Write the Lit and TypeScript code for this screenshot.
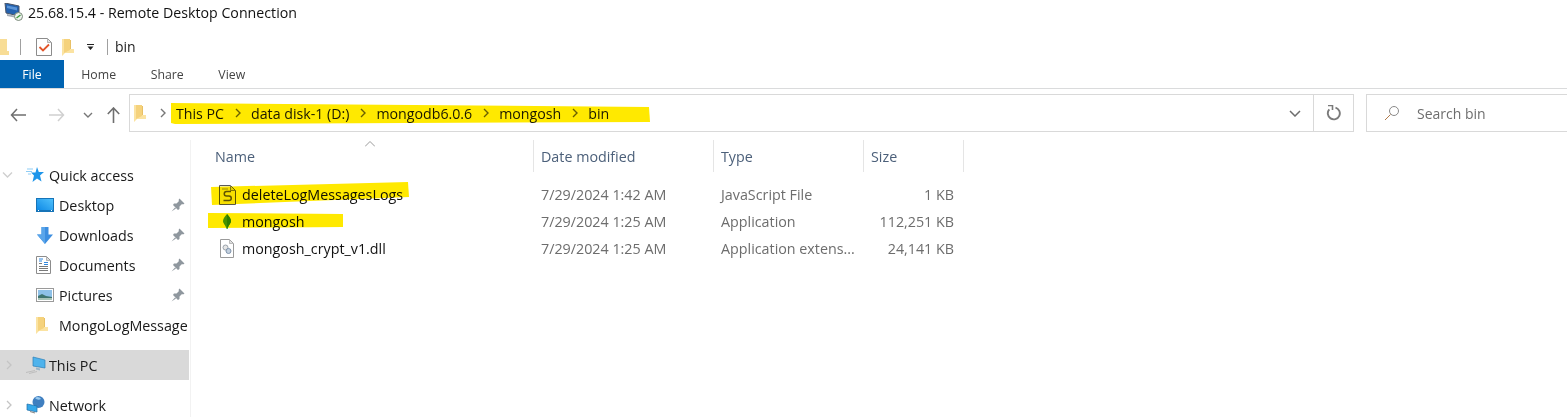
import { LitElement, html, css, svg } from 'lit';
import { customElement } from 'lit/decorators.js';

const folder = svg`<svg width="12" height="18" viewBox="0 0 12 18"><path d="M0 1h8v10h4v4H3l-3 3z" fill="#fbe3a2"/><path d="M2 1h6v11l-6 3z" fill="#f5d27c"/><path d="M8 2h1v9H8z" fill="#e8c066"/></svg>`;

const pin = svg`<svg class="pin" width="14" height="14" viewBox="0 0 14 14"><path d="M8.500 .5l5 5-1.500 1-1-.5-2.500 2.500V11L7 12 2 7l1-1.500h2.500L8 3l-.5-1zM4 9.500L.5 13.500 5 10.500z" fill="#8f979e"/></svg>`;

const navIcons: Record<string, unknown> = {
  Desktop: svg`<svg width="18" height="14" viewBox="0 0 18 14"><defs><linearGradient id="dk" x1="0" y1="1" x2="1" y2="0"><stop offset="0" stop-color="#0f8ae6"/><stop offset="1" stop-color="#4fc0fb"/></linearGradient></defs><rect width="18" height="14" fill="#1674b8"/><rect x="1" y="1" width="16" height="11" fill="url(#dk)"/><path d="M2 12.500h1M15 12.500h1" stroke="#fff"/></svg>`,
  Downloads: svg`<svg width="18" height="17" viewBox="0 0 18 17"><path d="M5.500 0h7v7.500H17L9 17 1 7.500h4.500z" fill="#3d8ee0"/><path d="M5.500 0h3.500v17L1 7.500h4.500z" fill="#5aa5ea"/></svg>`,
  Documents: svg`<svg width="15" height="18" viewBox="0 0 15 18"><path d="M.5 .5h10l4 4v13H.5z" fill="#fff" stroke="#8c8c8c"/><path d="M10.500 1v3.500H14" fill="#ddd" stroke="#8c8c8c" stroke-width=".6"/><path d="M3 3h4M3 5h3M8 6.500h4M8 8.500h4" stroke="#2f86de"/><path d="M3 10.500h9M3 12.500h9M3 14.500h9M3 7.500h3" stroke="#7a7a7a"/></svg>`,
  Pictures: svg`<svg width="18" height="14" viewBox="0 0 18 14"><rect x=".5" y=".5" width="17" height="13" fill="#fff" stroke="#9a9a9a"/><rect x="2" y="2" width="14" height="10" fill="#8ec1e8"/><path d="M2 8l4-2 4 2 6 1v3H2z" fill="#3f7570"/><path d="M2 10l14 0v2H2z" fill="#a9c4b8"/></svg>`,
};

const files = [
  { name: 'deleteLogMessagesLogs', date: '7/29/2024 1:42 AM', type: 'JavaScript File', size: '1 KB', icon: 'js' },
  { name: 'mongosh', date: '7/29/2024 1:25 AM', type: 'Application', size: '112,251 KB', icon: 'leaf' },
  { name: 'mongosh_crypt_v1.dll', date: '7/29/2024 1:25 AM', type: 'Application extens...', size: '24,141 KB', icon: 'dll' },
];

const fileIcon = (k: string) => {
  if (k === 'js') return svg`<svg width="17" height="20" viewBox="0 0 17 20"><path d="M.5 .5h11l5 5v14H.5z" fill="#f6f4dc" stroke="#5a5a5a"/><path d="M11.500 1v4.500H16" fill="#ddd" stroke="#5a5a5a" stroke-width=".7"/><path d="M12 6.500H7.500a2 2 0 0 0 0 4.500h2.500a2 2 0 0 1 0 4.500H4.500" fill="none" stroke="#5f5a28" stroke-width="1.500"/><path d="M3 4h6" stroke="#9a9a60"/></svg>`;
  if (k === 'leaf') return svg`<svg width="8" height="15" viewBox="0 0 8 15"><path d="M4 0c2 2.500 4 4.500 4 7 0 2.500-2.500 4-3.600 8h-.8C2.500 11 0 9.500 0 7c0-2.500 2-4.500 4-7z" fill="#46a02a"/><path d="M4 0c2 2.500 4 4.500 4 7 0 2.500-2.500 4-3.600 8H4z" fill="#2f8a22"/></svg>`;
  return svg`<svg width="14" height="19" viewBox="0 0 14 19"><path d="M.5 .5h9l4 4v14H.5z" fill="#fff" stroke="#9a9a9a"/><path d="M9.500 1v3.500H13" fill="#ddd" stroke="#9a9a9a" stroke-width=".6"/><circle cx="5.500" cy="8.500" r="2.500" fill="#e6e6e6" stroke="#9aa2aa"/><circle cx="8.500" cy="12" r="2.500" fill="#c3d0de" stroke="#7f93ab"/></svg>`;
};

const rightChev = svg`<svg width="6" height="10" viewBox="0 0 6 10"><path d="M1 1l4 4-4 4" fill="none" stroke="#c4c4c4" stroke-width="1.300"/></svg>`;

@customElement('app-root')
export class AppRoot extends LitElement {
  render() {
    return html`
      <div class="window">
        <div class="title">
          <svg width="20" height="19" viewBox="0 0 20 19"><path d="M1 0l14 3v10L2 10z" fill="#2462b0" stroke="#4a5568"/><path d="M3 2.500l10 2v3L3 5z" fill="#5b95d8"/><path d="M3 11l9 2 1 2-10-2z" fill="#a4acb5"/><circle cx="14.500" cy="13.500" r="4" fill="#eef2ee" stroke="#7a8a7a"/><path d="M12.500 15l4-3" stroke="#3a9a3a" stroke-width="1.300"/></svg>
          <span>25.68.15.4 - Remote Desktop Connection</span>
        </div>
        <div class="qat">
          <svg class="clip" width="9" height="16" viewBox="0 0 9 16"><path d="M0 0h7v12h2v4H0z" fill="#f8dd96"/></svg>
          <i class="bar"></i>
          <svg class="check" width="16" height="18" viewBox="0 0 16 18"><path d="M.5 .5h11l4 4v13H.5z" fill="#fff" stroke="#8c8c8c"/><path d="M11.500 1v3.500H15" fill="#e4e4e4" stroke="#8c8c8c" stroke-width=".6"/><path d="M3.500 9l3.500 3.500L13 6.500" fill="none" stroke="#e2552a" stroke-width="1.800"/></svg>
          <span class="qf">${folder}</span>
          <svg class="drop" width="7" height="6" viewBox="0 0 7 6"><path d="M0 0h7v1H0zM.5 2.500h6L3.500 6z" fill="#222"/></svg>
          <i class="bar"></i>
          <span class="qt">bin</span>
        </div>
        <div class="tabs">
          <span class="tab file">File</span>
          <span class="tab">Home</span>
          <span class="tab">Share</span>
          <span class="tab">View</span>
        </div>
        <div class="nav">
          <div class="arrows">
            <svg width="16" height="14" viewBox="0 0 16 14"><path d="M7 1L1.500 7 7 13M2 7h14" fill="none" stroke="#6f6f6f" stroke-width="1.500"/></svg>
            <svg class="fwd" width="16" height="14" viewBox="0 0 16 14"><path d="M9 1l5.500 6L9 13M14 7H0" fill="none" stroke="#d0d0d0" stroke-width="1.500"/></svg>
            <svg class="rec" width="10" height="6" viewBox="0 0 10 6"><path d="M1 1l4 4 4-4" fill="none" stroke="#777" stroke-width="1.400"/></svg>
            <svg class="up" width="13" height="16" viewBox="0 0 13 16"><path d="M.8 7l5.700-6 5.700 6M6.500 1v15" fill="none" stroke="#6f6f6f" stroke-width="1.600"/></svg>
          </div>
          <div class="address">
            <div class="crumbs">
              ${folder}
              <svg class="chev" width="6" height="10" viewBox="0 0 6 10"><path d="M1 1l4 4-4 4" fill="none" stroke="#777" stroke-width="1.400"/></svg>
              ${['This PC', 'data disk-1 (D:)', 'mongodb6.0.6', 'mongosh', 'bin'].map(
                (c, i) => html`${i ? html`<svg class="sep" width="6" height="10" viewBox="0 0 6 10"><path d="M1 1l4 4-4 4" fill="none" stroke="#6a6a20" stroke-width="1.400"/></svg>` : ''}<span>${c}</span>`
              )}
            </div>
            <svg class="more" width="12" height="7" viewBox="0 0 12 7"><path d="M1 1l5 5 5-5" fill="none" stroke="#6d6d6d" stroke-width="1.500"/></svg>
            <div class="refresh">
              <svg width="15" height="16" viewBox="0 0 15 16"><path d="M9.500 2.600a6 6 0 1 1-6.200 1.800" fill="none" stroke="#7a7a7a" stroke-width="1.900"/><path d="M2 .5h4.500V5" fill="none" stroke="#7a7a7a" stroke-width="1.600"/></svg>
            </div>
          </div>
          <div class="search">
            <svg width="16" height="16" viewBox="0 0 16 16"><circle cx="10" cy="6" r="4.500" fill="none" stroke="#8a8a8a"/><path d="M6.500 9.500L1 15" stroke="#b07a4a"/></svg>
            <span>Search bin</span>
          </div>
        </div>
        <div class="body">
          <div class="side">
            <div class="item">
              <span class="tw down"><svg width="11" height="6" viewBox="0 0 11 6"><path d="M1 .5l4.500 4.500L10 .5" fill="none" stroke="#cfcfcf" stroke-width="1.400"/></svg></span>
              <span class="tic"><svg width="18" height="16" viewBox="0 0 18 16"><path d="M11 0l1.800 5H18l-4 3.500 1.500 6-4.500-3-4.500 3.500 1.500-6.500-3-3h4.500z" fill="#1f96ea"/><path d="M1 2h6M0 4.500h6M2 7h3" stroke="#8fcdf5"/></svg></span>
              <span>Quick access</span>
            </div>
            ${Object.keys(navIcons).map(
              (k) => html`<div class="item sub"><span class="sic">${navIcons[k]}</span><span class="grow">${k}</span>${pin}</div>`
            )}
            <div class="item sub"><span class="sic">${folder}</span><span class="grow">MongoLogMessage</span></div>
            <div class="item gap sel">
              <span class="tw">${rightChev}</span>
              <span class="tic"><svg width="20" height="18" viewBox="0 0 20 18"><path d="M7 1l12 3v8L7 10z" fill="#4fb3ec" stroke="#2b7fb8" stroke-width=".7"/><path d="M10 11.500l4 1v2l-4-1z" fill="#9ab4c6"/><path d="M0 16.500l9-2M3 17.500l8-2" stroke="#bdbdbd"/></svg></span>
              <span>This PC</span>
            </div>
            <div class="item gap">
              <span class="tw">${rightChev}</span>
              <span class="tic"><svg width="19" height="18" viewBox="0 0 19 18"><circle cx="12.500" cy="6" r="6" fill="#3f7fc0"/><path d="M9 2c2-2 5-1 6 1-2 1-4 1-6-1z" fill="#9bcbf0"/><path d="M1 8l10 2v6L1 14z" fill="#35a8ea" stroke="#1f6fa8" stroke-width=".7"/><path d="M4 15.500l5 1.500" stroke="#8a8a8a" stroke-width="1.200"/></svg></span>
              <span>Network</span>
            </div>
          </div>
          <div class="list">
            <div class="row head">
              <span class="c name">Name</span>
              <span class="c">Date modified</span>
              <span class="c">Type</span>
              <span class="c">Size</span>
            </div>
            ${files.map(
              (f) => html`<div class="row file-row">
                <span class="c fn"><span class="fic">${fileIcon(f.icon)}</span>${f.name}</span>
                <span class="c dim">${f.date}</span>
                <span class="c dim">${f.type}</span>
                <span class="c dim size">${f.size}</span>
              </div>`
            )}
          </div>
        </div>

        <svg class="caret" width="10" height="6" viewBox="0 0 10 6"><path d="M0 5.500l5-5 5 5" fill="none" stroke="#9a9a9a"/></svg>
        <svg class="marks" width="1567" height="417" viewBox="0 0 1567 417">
          <path d="M171 103l478 4 1 15-475 2-4-1z" fill="#ffe900"/>
          <path d="M211 187l197-5 1 15-197 8z" fill="#ffe900"/>
          <path d="M208 213l135 1v13l-135 1z" fill="#ffe900"/>
        </svg>
      </div>
    `;
  }

  static styles = css`
    :host {
      display: block;
      font-family: 'Open Sans', 'Noto Sans', sans-serif;
      font-size: 14.3px;
      color: #1a1a1a;
    }
    * { box-sizing: border-box; }
    .window {
      position: relative;
      width: 1567px;
      height: 417px;
      overflow: hidden;
      background: #fff;
    }
    .title {
      height: 33px;
      padding: 0 0 8px 4px;
      display: flex;
      align-items: center;
      gap: 4px;
      color: #111;
      font-size: 14.200px;
    }
    .qat {
      height: 27px;
      display: flex;
      align-items: center;
    }
    .bar { width: 1px; height: 16px; background: #a0a0a0; }
    .clip { margin-right: 11px; }
    .check { margin-left: 15px; }
    .qf { margin-left: 10px; display: flex; }
    .drop { margin: 0 13px 0 13px; }
    .qt { margin-left: 7px; font-size: 14px; }
    .tabs {
      height: 29px;
      display: flex;
      align-items: stretch;
      border-bottom: 1px solid #dadbdc;
      font-size: 12.300px;
      color: #444;
    }
    .tab { display: flex; align-items: center; padding: 0 17.300px; }
    .tab.file { width: 64px; justify-content: center; padding: 0; background: #0063b1; color: #fff; }
    .nav {
      height: 51px;
      display: flex;
      align-items: center;
      padding: 0 0 3px 0;
    }
    .arrows { width: 129px; display: flex; align-items: center; padding-left: 10px; padding-top: 3px; }
    .fwd { margin-left: 23px; }
    .rec { margin-left: 18px; }
    .up { margin-left: 14px; }
    .address {
      width: 1225px;
      height: 38px;
      border: 1px solid #d9d9d9;
      display: flex;
      align-items: center;
    }
    .crumbs { flex: 1; display: flex; align-items: center; padding-left: 4px; font-size: 14.200px; color: #1a1a1a; }
    .chev { margin: 0 10px 0 14px; }
    .sep { margin: 0 10.500px; }
    .more { margin-right: 12px; }
    .refresh { width: 40px; height: 100%; border-left: 1px solid #d9d9d9; display: flex; align-items: center; justify-content: center; }
    .search {
      margin-left: 12px;
      flex: 1;
      height: 38px;
      border: 1px solid #d9d9d9;
      border-right: none;
      display: flex;
      align-items: center;
      padding-left: 17px;
      gap: 17px;
      font-size: 14px;
      color: #6d6d6d;
    }
    .body { display: flex; height: 277px; }
    .side {
      width: 191px;
      padding-top: 20px;
      border-right: 1px solid #f2f2f2;
      flex: none;
    }
    .item { height: 30px; display: flex; align-items: center; width: 189px; white-space: nowrap; }
    .item.gap { margin-top: 10px; }
    .tw { width: 24px; padding-left: 6px; display: flex; align-items: center; flex: none; }
    .tw.down { padding-left: 2px; }
    .tic { width: 25px; padding-left: 2px; display: flex; align-items: center; flex: none; }
    .sel { background: #d9d9d9; }
    .sub { padding-left: 35px; }
    .sic { width: 24px; padding-left: 1px; display: flex; flex: none; }
    .grow { flex: 1; }
    .pin { margin-right: 4px; flex: none; }
    .list { flex: 1; padding-left: 16px; }
    .row { display: grid; grid-template-columns: 327px 180px 150px 100px; align-items: center; }
    .head { height: 32px; margin-bottom: 9px; color: #4c607a; }
    .head .c { height: 32px; border-right: 1px solid #e5e5e5; display: flex; align-items: center; padding-left: 7px; }
    .head .name { padding-left: 8px; }
    .file-row { height: 27px; }
    .file-row .c { padding-left: 7px; white-space: nowrap; }
    .file-row .fn { display: flex; align-items: center; color: #111; padding-left: 8px; }
    .fic { width: 24px; margin-right: 3px; display: flex; align-items: center; justify-content: center; }
    .dim { color: #6d6d6d; }
    .file-row .size { text-align: right; padding-right: 10px; }
    .caret { position: absolute; left: 365px; top: 141px; }
    .marks { position: absolute; left: 0; top: 0; mix-blend-mode: multiply; pointer-events: none; z-index: 3; }
  `;
}
